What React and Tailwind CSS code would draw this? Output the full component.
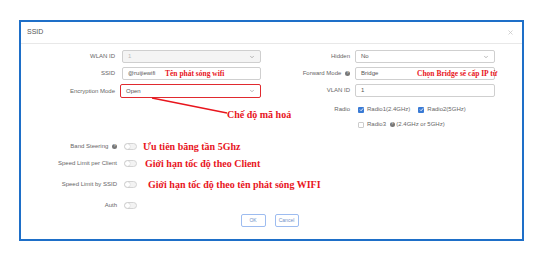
import { ChevronDown, X } from "lucide-react";

const labelCls = "text-[6px] leading-[9px] text-[#666] text-right whitespace-nowrap";
const serif = { fontFamily: '"Liberation Serif", serif' };

const HelpDot = () => (
  <span className="inline-flex items-center justify-center w-[5px] h-[5px] rounded-full bg-[#777] text-white text-[4px] leading-none ml-[2px] align-middle">
    ?
  </span>
);

const Select = ({ value, disabled, red }) => (
  <div
    className={`flex items-center justify-between h-[13px] px-[5px] rounded-[2px] border ${
      red ? "border-[#e02a2f] border-[1.5px] h-[14px]" : "border-[#cfcfcf]"
    } ${disabled ? "bg-[#f4f4f4] text-[#bbb]" : "bg-white text-[#555]"} text-[6px]`}
  >
    <span>{value}</span>
    <ChevronDown size={6} strokeWidth={2} className="text-[#777]" />
  </div>
);

const Input = ({ value }) => (
  <div className="flex items-center h-[13px] px-[5px] rounded-[2px] border border-[#cfcfcf] bg-white text-[6px] text-[#555]">
    {value}
  </div>
);

const Toggle = () => (
  <span className="flex items-center w-[13px] h-[7px] rounded-full border border-[#d4d4d4] bg-[#f3f3f3]">
    <span className="w-[5px] h-[5px] rounded-full bg-white shadow-[0_0_1px_#999]" />
  </span>
);

const Check = ({ checked }) =>
  checked ? (
    <span className="flex items-center justify-center w-[6px] h-[6px] rounded-[1px] bg-[#3a7bd5]">
      <svg width="5" height="5" viewBox="0 0 10 10">
        <path d="M2 5.2 L4.2 7.4 L8.2 2.8" stroke="white" strokeWidth="1.8" fill="none" />
      </svg>
    </span>
  ) : (
    <span className="w-[6px] h-[6px] rounded-[1px] border border-[#ccc] bg-white" />
  );

const FormRow = ({ label, labelW, children, gap = "gap-[7px]", inputW }) => (
  <div className={`flex items-center ${gap}`}>
    <div className={`${labelCls} ${labelW}`}>{label}</div>
    <div className={inputW}>{children}</div>
  </div>
);

const SwitchRow = ({ label, note, noteMl, className }) => (
  <div className={`flex items-center h-[15px] shrink-0 ${className}`}>
    <div className={`${labelCls} w-[96px]`}>{label}</div>
    <div className="ml-[7px]">
      <Toggle />
    </div>
    {note && (
      <span
        className={`${noteMl} text-[10px] leading-[15px] font-bold text-[#e8151d] whitespace-nowrap`}
        style={serif}
      >
        {note}
      </span>
    )}
  </div>
);

export default function App() {
  return (
    <div
      className="relative w-[539px] h-[253px] bg-white pt-[20px] pl-[19px]"
      style={{ fontFamily: '"Liberation Sans", Arial, sans-serif' }}
    >
      <div className="w-[505px] h-[221px] border-2 border-[#1e6fc8] bg-white">
        {/* header */}
        <div className="flex items-center justify-between h-[22px] pl-[6px] pr-[8px] border-b border-[#e8e8e8]">
          <span className="text-[7px] text-[#555]">SSID</span>
          <X size={7} strokeWidth={2.5} className="text-[#c4c4c4]" />
        </div>

        {/* top form */}
        <div className="flex pt-[6px] h-[85px]">
          <div className="w-[240px] flex flex-col gap-[4px]">
            <FormRow label="WLAN ID" labelW="w-[94px]" inputW="w-[139px]">
              <Select value="1" disabled />
            </FormRow>
            <FormRow label="SSID" labelW="w-[94px]" inputW="w-[139px]">
              <Input value="@ruijiewifi" />
            </FormRow>
            <FormRow label="Encryption Mode" labelW="w-[94px]" inputW="w-[141px]" gap="gap-[5px]">
              <Select value="Open" red />
            </FormRow>
          </div>
          <div className="flex flex-col gap-[4px]">
            <FormRow label="Hidden" labelW="w-[89px]" inputW="w-[140px]" gap="gap-[5px]">
              <Select value="No" />
            </FormRow>
            <FormRow
              label={
                <>
                  Forward Mode <HelpDot />
                </>
              }
              labelW="w-[89px]"
              inputW="w-[140px]"
              gap="gap-[5px]"
            >
              <Input value="Bridge" />
            </FormRow>
            <FormRow label="VLAN ID" labelW="w-[89px]" inputW="w-[140px]" gap="gap-[5px]">
              <Input value="1" />
            </FormRow>
            <div className="flex items-center gap-[5px] mt-[4px]">
              <div className={`${labelCls} w-[89px]`}>Radio</div>
              <div className="flex items-center gap-[3px] text-[6px] leading-[9px] text-[#666] ml-[3px]">
                <Check checked />
                <span>Radio1(2.4GHz)</span>
                <span className="ml-[2px]" />
                <Check checked />
                <span>Radio2(5GHz)</span>
              </div>
            </div>
            <div className="flex items-center gap-[3px] text-[6px] leading-[9px] text-[#666] ml-[97px] mt-[2px]">
              <Check />
              <span>
                Radio3 <HelpDot /> (2.4GHz or 5GHz)
              </span>
            </div>
          </div>
        </div>

        {/* switches */}
        <div className="flex flex-col">
          <SwitchRow
            className="mt-[10px]"
            label={
              <>
                Band Steering <HelpDot />
              </>
            }
            note="Ưu tiên băng tần 5Ghz"
            noteMl="ml-[6px]"
          />
          <SwitchRow
            className="mt-[2px]"
            label="Speed Limit per Client"
            note="Giới hạn tốc độ theo Client"
            noteMl="ml-[8px]"
          />
          <SwitchRow
            className="mt-[6px]"
            label="Speed Limit by SSID"
            note="Giới hạn tốc độ theo tên phát sóng WIFI"
            noteMl="ml-[11px]"
          />
          <SwitchRow className="mt-[6px]" label="Auth" />
        </div>

        {/* buttons */}
        <div className="flex justify-center gap-[9px] mt-[1px] pr-[4px]">
          <button className="w-[25px] h-[13px] rounded-[2px] border border-[#9dbcf0] text-[5px] text-[#6f8fc8] bg-white">
            OK
          </button>
          <button className="w-[24px] h-[13px] rounded-[2px] border border-[#9dbcf0] text-[5px] text-[#6f8fc8] bg-white">
            Cancel
          </button>
        </div>
      </div>

      {/* annotations */}
      <span
        className="absolute left-[165px] top-[68px] text-[7.5px] font-bold text-[#e8151d] whitespace-nowrap"
        style={serif}
      >
        Tên phát sóng wifi
      </span>
      <span
        className="absolute left-[417px] top-[68px] text-[7.5px] font-bold text-[#e8151d] whitespace-nowrap"
        style={serif}
      >
        Chọn Bridge sẽ cấp IP từ
      </span>
      <svg className="absolute left-0 top-0" width="539" height="253">
        <line x1="152" y1="98" x2="227" y2="113" stroke="#e8151d" strokeWidth="1.5" />
      </svg>
      <span
        className="absolute left-[227px] top-[107px] text-[10px] font-bold text-[#e8151d] whitespace-nowrap"
        style={serif}
      >
        Chế độ mã hoá
      </span>
    </div>
  );
}
